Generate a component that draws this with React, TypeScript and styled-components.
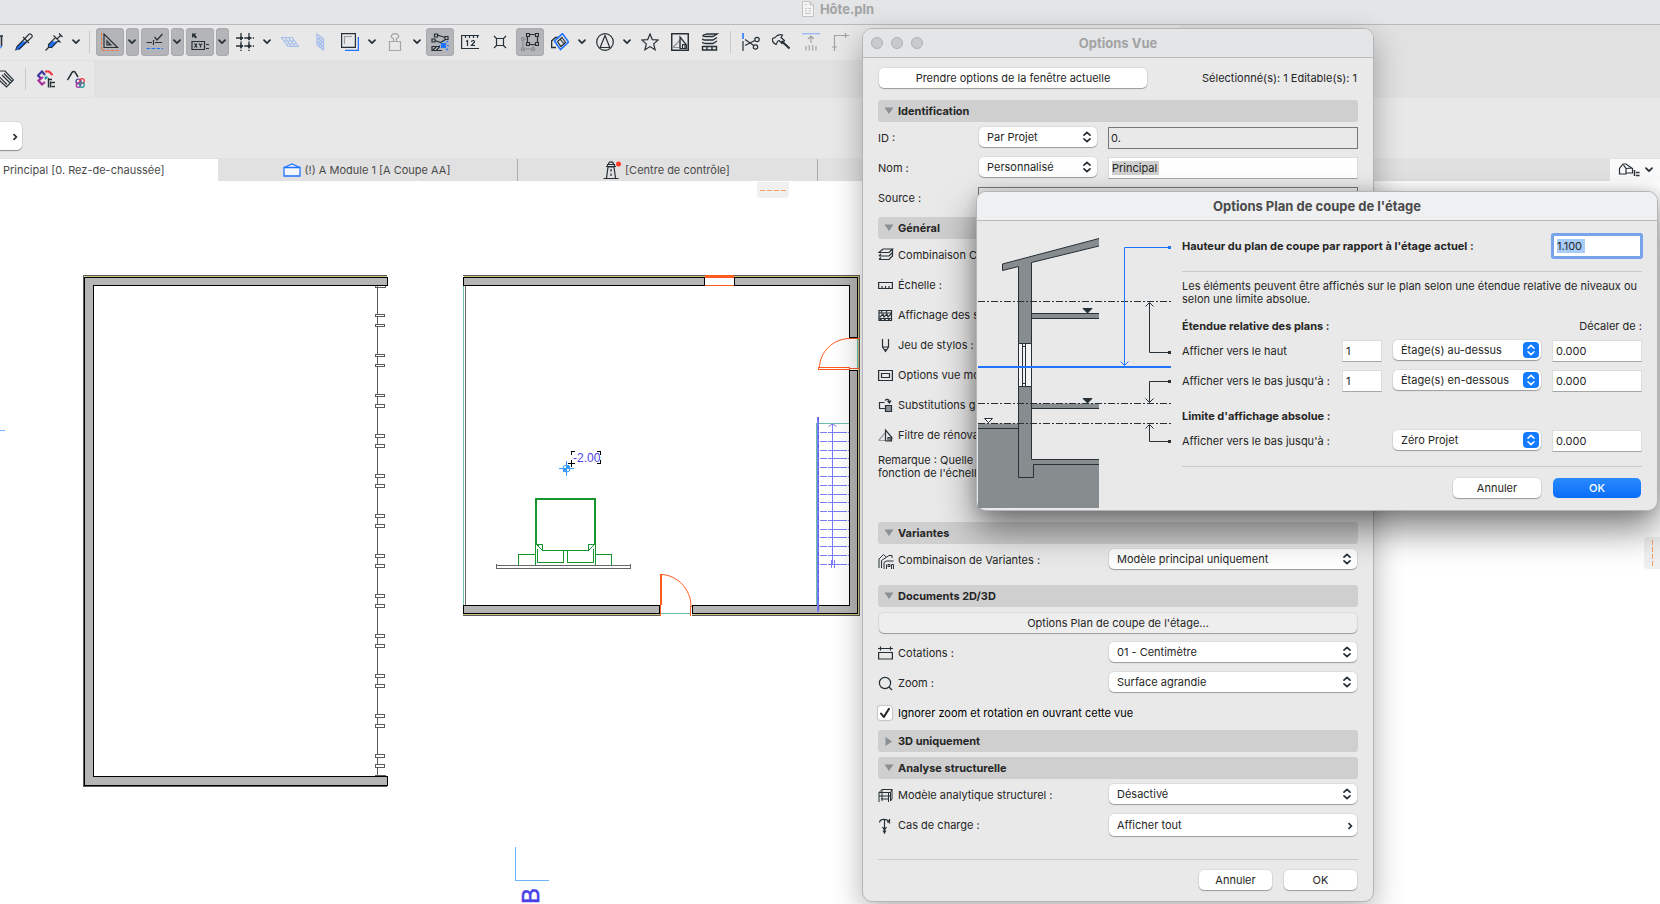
import React from "react";
import styled, { createGlobalStyle, css } from "styled-components";

const INK = "#263036";
const BLUE = "#1f73ff";

const GlobalStyle = createGlobalStyle`
  *, *::before, *::after { box-sizing: border-box; }
  body { margin: 0; background: #fff; }
  body, button, input, select {
    font-family: Inter, "Liberation Sans", sans-serif;
    font-size: 11px;
    line-height: 13px;
    color: #262626;
  }
  svg { display: block; flex: none; }
`;

/* ---------- main window ---------- */

const Desktop = styled.div`
  position: relative;
  display: flex;
  flex-direction: column;
  min-height: 100vh;
  overflow: hidden;
`;

const WindowTitle = styled.header`
  display: flex;
  justify-content: center;
  align-items: center;
  gap: 6px;
  height: 25px;
  padding: 0 0 6px 16px;
  background: #e4e5e6;
  border-bottom: 1px solid #b9babc;
  color: #a2a3a5;
  font-size: 13px;
  font-weight: 700;
  line-height: 18px;
`;

const BarArea = styled.div`
  background: #e1e1e1;
`;

const Toolbar = styled.div`
  display: flex;
  align-items: center;
  gap: 2px;
  width: 71%;
  height: 35px;
  padding-bottom: 1px;
  background: #e8e8e8;
`;

const SmallToolbar = styled(Toolbar)`
  width: max-content;
  height: 36px;
  margin: 1px 0;
  padding: 0 4px 0 0;
`;

const ToolButton = styled.button<{ $on?: boolean; $cut?: number }>`
  display: flex;
  flex: none;
  justify-content: center;
  align-items: center;
  width: 28px;
  height: 28px;
  padding: 0;
  border: 0;
  border-radius: 4px;
  background: ${(p) => (p.$on ? "#b4b5b9" : "transparent")};
  ${(p) => p.$on && css`box-shadow: inset 0 0 0 1px #a9aaae;`}
  ${(p) =>
    p.$cut &&
    css`
      justify-content: flex-end;
      overflow: hidden;
      width: ${p.$cut}px;
      padding-right: 5px;
    `}
`;

const MenuButton = styled(ToolButton)`
  width: 13px;
  padding-right: 1px;
`;

const Separator = styled.span`
  flex: none;
  width: 9px;
  height: 22px;
  background: linear-gradient(#c9c9c9, #c9c9c9) center / 1px 100% no-repeat;
`;

const InfoBar = styled.div`
  display: flex;
  align-items: center;
  height: 60px;
  padding-top: 16px;
  background: #e8e8e8;
`;

const InfoButton = styled.button`
  display: flex;
  align-items: center;
  justify-content: flex-end;
  width: 22px;
  height: 28px;
  padding: 2px 4px 0 0;
  border: 0;
  border-radius: 0 5px 5px 0;
  background: #fff;
  box-shadow: 0 1px 1px rgba(0, 0, 0, 0.35), 0 0 0 1px rgba(0, 0, 0, 0.06);
`;

const TabBar = styled.nav`
  display: flex;
  height: 23px;
  padding-top: 1px;
  background: #e1e1e1;
`;

const Tab = styled.button<{ $active?: boolean }>`
  display: flex;
  flex: none;
  align-items: center;
  justify-content: ${(p) => (p.$active ? "flex-start" : "center")};
  gap: 4px;
  width: ${(p) => (p.$active ? 218 : 300)}px;
  padding: ${(p) => (p.$active ? "0 0 0 3px" : "0 2px 0 0")};
  border: 0;
  border-right: ${(p) => (p.$active ? 0 : "1px solid #ababab")};
  background: ${(p) => (p.$active ? "#fff" : "transparent")};
  color: #4a4a4a;
  white-space: nowrap;
`;

const TabTools = styled.button`
  display: flex;
  align-items: center;
  justify-content: center;
  gap: 5px;
  width: 50px;
  margin-left: auto;
  padding: 0;
  border: 0;
  background: #fafafa;
`;

const Canvas = styled.main`
  position: relative;
  flex: 1;
  background: #fff;
  > svg {
    position: absolute;
    inset: 0;
    width: 100%;
    height: 100%;
  }
`;

const DockHandle = styled.span<{ $side?: boolean }>`
  position: absolute;
  display: flex;
  justify-content: center;
  align-items: center;
  background: #f0f0f0;
  ${(p) =>
    p.$side
      ? css`top: 356px; right: 0; width: 16px; height: 32px; border-radius: 4px 0 0 4px;`
      : css`top: 1px; left: 757px; width: 32px; height: 16px; border-radius: 0 0 4px 4px;`}
  &::after {
    content: "";
    width: ${(p) => (p.$side ? "1px" : "26px")};
    height: ${(p) => (p.$side ? "26px" : "1px")};
    background: repeating-linear-gradient(${(p) => (p.$side ? "180deg" : "90deg")}, #f5a067 0 5px, transparent 5px 7px);
  }
`;

/* ---------- dialogs ---------- */

const Dialog = styled.section<{ $front?: boolean }>`
  position: absolute;
  border: 1px solid #b4b5b6;
  border-radius: 10px;
  background: #e9e9e9;
  ${(p) =>
    p.$front
      ? css`
          top: 191px;
          left: 976px;
          width: 682px;
          box-shadow: 0 18px 36px rgba(0, 0, 0, 0.5), 0 0 14px rgba(0, 0, 0, 0.14);
        `
      : css`
          top: 28px;
          left: 862px;
          width: 512px;
          box-shadow: 0 10px 30px rgba(0, 0, 0, 0.3);
        `}
`;

const DialogTitle = styled.div<{ $front?: boolean }>`
  display: flex;
  align-items: center;
  height: 29px;
  padding: 0 8px;
  border-bottom: 1px solid #b9babc;
  border-radius: 9px 9px 0 0;
  background: ${(p) => (p.$front ? "#eff0f1" : "#e4e5e6")};
  h2 {
    flex: 1;
    margin: 0;
    color: ${(p) => (p.$front ? "#4a4a4a" : "#a2a3a5")};
    font-size: 13px;
    font-weight: 700;
    line-height: 18px;
    text-align: center;
  }
`;

const Lights = styled.div`
  display: flex;
  gap: 8px;
  width: 52px;
`;

const TitleSpacer = styled.span`
  width: 52px;
`;

const Light = styled.button`
  width: 12px;
  height: 12px;
  padding: 0;
  border: 1px solid #b0b1b3;
  border-radius: 50%;
  background: #c8c9cb;
`;

const ViewBody = styled.div`
  display: flex;
  flex-direction: column;
  padding: 5px 15px 11px;
`;

const SectionHead = styled.button<{ $gap: number }>`
  display: flex;
  align-items: center;
  gap: 4px;
  height: 22px;
  margin: ${(p) => p.$gap}px 0 1px;
  padding: 0 6px;
  border: 0;
  border-radius: 3px;
  background: #cfcfcf;
  font-weight: 700;
  text-align: left;
`;

const Row = styled.div`
  display: flex;
  align-items: center;
  height: 30px;
  white-space: nowrap;
`;

const RowLabel = styled.label<{ $narrow?: boolean }>`
  display: flex;
  flex: ${(p) => (p.$narrow ? "0 0 100px" : "1")};
  align-items: center;
  gap: 5px;
`;

const Status = styled.span`
  margin: 0 1px 0 auto;
`;

const raised = css`
  border: 0;
  border-radius: 5px;
  background: #fff;
  box-shadow: 0 1px 1px rgba(0, 0, 0, 0.3), 0 0 0 1px rgba(0, 0, 0, 0.05);
`;

const PushButton = styled.button<{ $width?: string; $tone?: "primary" | "quiet" }>`
  ${raised}
  width: ${(p) => p.$width || "73px"};
  height: 20px;
  margin: 0 1px;
  padding: 0;
  text-align: center;
  ${(p) => p.$tone === "quiet" && css`flex: 1; background: #eeeeee;`}
  ${(p) =>
    p.$tone === "primary" &&
    css`
      background: linear-gradient(#2a8aff, #0a6cf8);
      color: #fff;
      font-weight: 500;
      box-shadow: none;
    `}
`;

const SelectBox = styled.span<{ $width: number }>`
  position: relative;
  flex: none;
  width: ${(p) => p.$width}px;
  height: 20px;
  margin: 0 1px 2px;
  select {
    ${raised}
    appearance: none;
    display: block;
    width: 100%;
    height: 20px;
    padding: 0 24px 0 8px;
  }
  svg {
    position: absolute;
    top: 4px;
    right: 6px;
    pointer-events: none;
  }
`;

const BlueSelectBox = styled(SelectBox)`
  margin: 0 0 2px;
  svg {
    top: 2px;
    right: 2px;
  }
`;

const PopButton = styled.button`
  ${raised}
  display: flex;
  flex: none;
  justify-content: space-between;
  align-items: center;
  width: 248px;
  height: 22px;
  margin: 0 1px;
  padding: 1px 4px 0 8px;
`;

const Field = styled.input<{ $mark?: string; $markWidth?: number; $ring?: boolean; $frame?: boolean }>`
  width: 100%;
  min-width: 0;
  height: 22px;
  padding: 0 3px;
  border: 1px solid #dcdcdc;
  border-bottom-color: #a6a6a6;
  border-radius: 0;
  outline: none;
  background: #fff;
  ${(p) => p.$mark && css`background: linear-gradient(${p.$mark}, ${p.$mark}) 3px 3px / ${p.$markWidth}px 14px no-repeat #fff;`}
  ${(p) => p.$frame && css`padding: 0 2px; border: 1px solid #777; background: transparent;`}
  ${(p) => p.$ring && css`border-color: #76a3ea; border-radius: 1px; box-shadow: 0 0 0 2px #76a3ea;`}
`;

const FieldSlot = styled.span`
  display: flex;
  flex: 1;
  margin-left: 10px;
`;

const SourceSlot = styled(FieldSlot)`
  margin-left: 0;
`;

const Note = styled.p`
  height: 68px;
  margin: 0;
  padding-top: 4px;
`;

const CheckLabel = styled.label`
  display: flex;
  align-items: center;
  gap: 6px;
  color: #000;
`;

const CheckBox = styled.input`
  appearance: none;
  width: 14px;
  height: 14px;
  margin: 0;
  border-radius: 3px;
  box-shadow: 0 0 1px 1px rgba(0, 0, 0, 0.16);
  background: #fff
    url("data:image/svg+xml,%3Csvg xmlns='http://www.w3.org/2000/svg' viewBox='0 0 14 14'%3E%3Cpath d='M3 7.5 5.8 11 11 2.8' fill='none' stroke='%23222' stroke-width='2' stroke-linecap='round' stroke-linejoin='round'/%3E%3C/svg%3E");
`;

const Rule = styled.hr<{ $top: number; $bottom: number }>`
  width: 100%;
  height: 1px;
  margin: ${(p) => p.$top}px 0 ${(p) => p.$bottom}px;
  border: 0;
  background: #cbcbcb;
`;

const Actions = styled.footer`
  display: flex;
  justify-content: flex-end;
  gap: 10px;
`;

const CutBody = styled.div`
  display: flex;
  gap: 11px;
  padding: 0 15px 0 1px;
`;

const CutForm = styled.div`
  flex: 1;
  padding: 10px 0 12px;
  p {
    margin: 0;
  }
`;

const HeightRow = styled(Row)`
  justify-content: space-between;
  padding-right: 1px;
  font-weight: 700;
`;

const HeightField = styled.span`
  width: 88px;
`;

const FormTitle = styled.div`
  display: flex;
  justify-content: space-between;
  align-items: center;
  height: 20px;
  margin-top: 10px;
  h3 {
    margin: 0;
    font-size: 11px;
    font-weight: 700;
  }
`;

const FormRow = styled.div`
  display: grid;
  grid-template-columns: 1fr 40px 148px 90px;
  column-gap: 11px;
  align-items: center;
  height: 30px;
  white-space: nowrap;
`;

/* ---------- icons ---------- */

const Icon = ({ children, w = 18, h = 18 }: { children: React.ReactNode; w?: number; h?: number }) => (
  <svg width={w} height={h} viewBox={`0 0 ${w} ${h}`} fill="none" stroke={INK} strokeWidth="1.2" aria-hidden="true">
    {children}
  </svg>
);

const Chevron = () => (
  <Icon w={8} h={6}>
    <path d="M1 1.2 4 4.2 7 1.2" strokeWidth="1.7" strokeLinecap="round" strokeLinejoin="round" />
  </Icon>
);

const RightChevron = () => (
  <Icon w={6} h={8}>
    <path d="M1.5 1.2 4.4 4 1.5 6.8" strokeWidth="1.7" />
  </Icon>
);

const UpDown = () => (
  <Icon w={8} h={12}>
    <path d="M1 4.2 4 1.4 7 4.2M1 7.8 4 10.6 7 7.8" strokeWidth="1.7" strokeLinecap="round" strokeLinejoin="round" />
  </Icon>
);

const BlueUpDown = () => (
  <Icon w={16} h={16}>
    <rect width="16" height="16" rx="4" fill="#147bff" stroke="none" />
    <path d="M5 6.2 8 3.4 11 6.2M5 9.8 8 12.6 11 9.8" stroke="#fff" strokeWidth="1.5" strokeLinecap="round" strokeLinejoin="round" />
  </Icon>
);

const Triangle = ({ open }: { open: boolean }) => (
  <Icon w={10} h={9}>
    <path d={open ? "M0.5 0.5H9.5L5 7Z" : "M1.5 0V9L8 4.5Z"} fill="#8a8f93" stroke="none" />
  </Icon>
);

const toolIcons: Record<string, React.ReactNode> = {
  edge: (
    <Icon>
      <path d="M13 3V12M16.500 3V13M12 3H18" strokeWidth="1.6" />
      <path d="M13 17 17 13" stroke={BLUE} />
    </Icon>
  ),
  pipette: (
    <Icon>
      <path d="M1.500 16.500 2.500 13.500 7 9H11.500L4.500 16Z" fill={BLUE} stroke={BLUE} />
      <path d="M0.600 17.400 2 13.500 9.500 6M3.500 16.500 12 8.500M8 4 14 10M10 5.500 14 1.200C15.200 0 18.200 2.600 16.800 4.200L12.500 8.200" />
    </Icon>
  ),
  syringe: (
    <Icon>
      <path d="M4 13.500V12L7 9H11.500L6.500 14.500Z" fill={BLUE} stroke={BLUE} />
      <path d="M0.500 17.500 4 14M3.500 14.500V11.500L10.500 4.500 13.500 7.500 6.500 14.500ZM8.500 2.500 15.500 9.500M12 6 16 2M14 0.500 17.500 4" />
    </Icon>
  ),
  square: (
    <Icon>
      <path d="M1 17.500H18M0.500 0V18" stroke="#f0743a" strokeDasharray="3 1.500" />
      <path d="M3 1V14.500H16.500ZM6 8V11.800H9.800Z" />
    </Icon>
  ),
  guide: (
    <Icon>
      <path d="M0.500 9.500H6M7.500 7V12M9 9.500H16M8.500 4 11 7 16.500 1" />
      <path d="M0.500 15.500H17" stroke={BLUE} strokeDasharray="3.500 1.500" />
    </Icon>
  ),
  coords: (
    <Icon>
      <path d="M1 0.500H5.500L4 2 6 4 4.500 5.500 2.500 3.500 1 5Z" fill={INK} stroke="none" />
      <path d="M1 8.500H13.500V16.500H1ZM3.500 10.500 6 14.500M6 10.500 3.500 14.500M8 10.500 9.500 12.500 11 10.500M9.500 12.500V14.500M15 11.500H18M15 15.500H18" />
    </Icon>
  ),
  grid: (
    <Icon>
      <path d="M5 0V18M13 0V18M0 5H18M0 13H18" strokeDasharray="3 1.200" strokeWidth="1.3" />
      <path d="M5 3.300V6.700M3.300 5H6.700M13 3.300V6.700M11.300 5H14.700M5 11.300V14.700M3.300 13H6.700M13 11.300V14.700M11.300 13H14.700" strokeWidth="2" />
    </Icon>
  ),
  plane: (
    <Icon>
      <path d="M0.500 4.500H11L17.500 13.500H7ZM3 8H13M5 11H15.500M4 4.500 10.500 13.500M7.500 4.500 14 13.500" stroke="#a3bdec" />
    </Icon>
  ),
  wallPlane: (
    <Icon>
      <path d="M6 1 12.500 6V17L6 12ZM8.200 2.500V13.500M10.300 4V15.500M6 5 12.500 10M6 8.500 12.500 13.500" stroke="#a3bdec" />
    </Icon>
  ),
  trace: (
    <Icon>
      <path d="M4 17.400H17.400V4" stroke={BLUE} strokeWidth="1.400" />
      <path d="M0.600 0.600H14.400V14.400H0.600Z" />
      <path d="M3.500 11V3.500H11" stroke="#9aa0a4" />
    </Icon>
  ),
  stamp: (
    <Icon>
      <path d="M3.500 8.500H14.500V17.500H3.500ZM7.500 8V5.500C3.500 4 5.500 0.600 9 0.600S14.500 4 10.500 5.500V8" stroke="#a6a6a6" />
    </Icon>
  ),
  gravity: (
    <Icon>
      <path d="M3.500 1H6.500V4H3.500ZM14 3.500H17V6.500H14ZM1 6H4V9H1ZM6.500 2 14 4.500M4 7.500 9.500 9.500 14.500 6.500" />
      <path d="M10.500 10.500H14.500V14.500H10.500ZM12.500 8V9M8 12.500H9M16 12.500H18M15.500 15.500 17 17M15.500 9.500 17 8" fill={BLUE} stroke={BLUE} />
      <path d="M9 13.500H1V17.500H11M2 17 5 14M5.500 17 8.500 14" />
    </Icon>
  ),
  ruler: (
    <Icon>
      <path d="M18 2.500H0.600V15.500H18M4.500 2.500V5M8.500 2.500V5M12.500 2.500V5M16.500 2.500V5M5 8.500 6.500 7.500V13M10.500 9C10.500 7 14 7 13.500 9L10.500 12.500H14" />
    </Icon>
  ),
  node: (
    <Icon>
      <path d="M5.500 5.500H12.500V12.500H5.500ZM3 3 6 6M15 3 12 6M3 15 6 12M15 15 12 12" />
    </Icon>
  ),
  group: (
    <Icon>
      <path d="M2 6V16H12M2 6H7M12 16V11" stroke="#8b8c91" />
      <path d="M0.500 4.500H3V7H0.500ZM0.500 15H3V17.500H0.500ZM11 15H13.500V17.500H11Z" stroke="#8b8c91" fill="#b4b5b9" />
      <path d="M6.500 1.500H16.500V11.500H6.500Z" />
      <path d="M5.500 0.500H8.500V3.500H5.500ZM14.500 0.500H17.500V3.500H14.500ZM5.500 9.500H8.500V12.500H5.500ZM14.500 9.500H17.500V12.500H14.500Z" fill="#b4b5b9" />
    </Icon>
  ),
  rotated: (
    <Icon>
      <path d="M5 14.500H0.600V8L4.500 4.500H8" strokeWidth="1.400" />
      <path d="M11.500 0.600 17.500 9 9.500 16.500 3.500 8Z" stroke={BLUE} strokeWidth="1.600" />
      <path d="M11 4.500 14.500 9.500 10 13.500 6.500 8.500ZM9 6 13 11" />
    </Icon>
  ),
  circle: (
    <Icon>
      <circle cx="9" cy="9" r="8.300" />
      <path d="M9 2.500 13.800 14.500H4.200Z" />
    </Icon>
  ),
  star: (
    <Icon>
      <path d="M9 1 11.300 6.600 17.200 7 12.700 10.900 14.100 16.800 9 13.600 3.900 16.800 5.300 10.900 0.800 7 6.700 6.600Z" />
    </Icon>
  ),
  house: (
    <Icon>
      <path d="M0.700 0.700H17.300V17.300H0.700Z" strokeWidth="1.500" />
      <path d="M2 14.500 9 7V14.500H2Z" stroke="#8f9496" />
      <path d="M9 4 15.500 12V15.500H9ZM11.500 15.500V11.500H14V15.500" />
    </Icon>
  ),
  layers: (
    <Icon>
      <path d="M1.500 13.500H15.500V17H1.500ZM6 13.500V17M11 13.500V17" strokeWidth="1.400" />
      <path d="M2.500 2 6 1H16L12 3.500H5C1.500 3.500 1.500 2.500 2.500 2M1.500 5.500C1.500 7 3 7 5 7H12L16 4.500M1.500 9C1.500 10.500 3 10.500 5 10.500H12L16 8" strokeWidth="1.300" />
    </Icon>
  ),
  scissors: (
    <Icon>
      <path d="M1 0V6" stroke={BLUE} strokeWidth="1.500" />
      <path d="M1 8V18" />
      <circle cx="15" cy="6.500" r="2.200" />
      <circle cx="13.500" cy="14" r="2.200" />
      <path d="M3 6.500 11.800 12.600M3 12.500 12.800 7.500" />
    </Icon>
  ),
  axe: (
    <Icon>
      <path d="M9.500 8 17.500 15.500" strokeWidth="2" />
      <path d="M3 4.500C5 2 8 1 10.500 2L9 4.500 12.500 7.500 10 10.500 7 7.500C4.500 8 5.500 10 4 11.500 1 10 0 7.500 0.600 5.500Z" />
    </Icon>
  ),
  offset: (
    <Icon>
      <path d="M0 0.700H18" stroke="#8fb3f7" />
      <path d="M9 3V10M6 6 9 3 12 6M4 13V17.500M7.300 12V17.500M10.700 12V17.500M14 13V17.500" stroke="#a3a3a3" />
    </Icon>
  ),
  corner: (
    <Icon>
      <path d="M2.500 18V2.500H17M0 14H5M13.500 0V5" stroke="#a3a3a3" />
    </Icon>
  ),
  tag: (
    <Icon>
      <path d="M1 1H9L17.500 10 10.500 17 1 8ZM6 5 14 13M3.500 7 11 14.500M8 3.500 15.500 11" />
    </Icon>
  ),
  schedule: (
    <Icon>
      <path d="M8 5 5 1.500 1 5.500 4.500 9" stroke="#3b3a9c" strokeWidth="2.200" />
      <path d="M8 1.500H12L15.500 5" stroke="#ef3340" strokeWidth="2.200" />
      <path d="M6 7 1.500 10.500 5 14.500 8 12" stroke="#a8329b" strokeWidth="2.200" />
      <path d="M8 9 10 6.500" stroke="#1d9aa0" strokeWidth="2.200" />
      <path d="M11.500 8V17.500M12 9.500H15M13.500 11.500V17.500M14 12.500H18M14.500 16.500H18" strokeWidth="1.400" />
    </Icon>
  ),
  change: (
    <Icon>
      <path d="M0.500 10 5 2.500C6 1 8 1 8.500 3L11 7" strokeWidth="1.500" />
      <circle cx="11.500" cy="11.500" r="2.500" stroke="#3b3a9c" />
      <circle cx="15" cy="11" r="2.300" stroke="#ef3340" />
      <circle cx="11.500" cy="15" r="2.300" stroke="#a8329b" />
      <circle cx="15" cy="15" r="2.300" stroke="#1d9aa0" />
    </Icon>
  ),
};

const rowIcons: Record<string, React.ReactNode> = {
  layers: <path d="M1 4.500 5 1H14.500L11 4.500ZM1 8 3 6M1 8H11L14.500 4.500M1 11.500 3 9.500M1 11.500H11L14.500 8V1" />,
  scale: <path d="M0.600 4.500H14.400V10.500H0.600ZM4 10V8M7.500 10V8M11 10V8" />,
  structure: <path d="M1 2.500H13.500V12.500H1ZM1 5H13.500M1 10.500H13.500M2 9 5 6 6 9 9 6 10 9 13 6M2 12 4 10.500M6 12 8 10.500M10 12 12 10.500M3 4.500 4 3M8 4.500 9 3" />,
  pen: <path d="M4.500 1V9L7.500 13.500 10.500 9V1M4.500 9H10.500M6.500 11.500H8.500" />,
  model: <path d="M0.600 2.500H14.400V12.500H0.600ZM3.500 5.500H11.500V9.500H3.500Z" />,
  override: (
    <>
      <path d="M7 10.500H1.500V4.500H6.500M7 2.500C9 0.500 11 1 11.500 4M9.500 3 11.500 5 13 2.500" />
      <path d="M7.500 7.500H13.500V13.500H7.500Z" fill="#8a8f93" />
    </>
  ),
  renovation: (
    <>
      <path d="M0.600 12.500 7 5M0.600 12.500H7" stroke="#9b9fa2" />
      <path d="M7.500 13V2L13.500 9V13H7.500M10 13V9.500H12V13M13 8.500 14.500 10.500" />
    </>
  ),
  variant: <path d="M1 15V6L5.500 1.500 8 4M3.500 15V7.500L11 2.500H14V5M6 16V9.500L8.500 8H15.500M8.500 16V11.500M10 11.500H12V13.500H10ZM13.500 16V11.500H15.500V16" strokeWidth="1" />,
  dimension: <path d="M0 2.500H15M2.500 0.500V4.500M12.500 0.500V4.500M0.600 6.500H14.400V13H0.600Z" />,
  zoom: (
    <>
      <circle cx="7" cy="7" r="5.600" />
      <path d="M11 11 14 14" />
    </>
  ),
  analytic: <path d="M1 14V4.500L4 1.500H14V11L12.500 13V4.500H1M4 13V1.500M1 8H12.500M10.500 14V5M3 11H10.500M12.500 4.500 14 1.500" strokeWidth="1" />,
  load: <path d="M6.500 2V11M1.500 4.500C2 0.500 9 0.500 11 4M11.500 1V5.500M9 4H12M4.500 9 6.500 12 8.500 9M5.500 13H7.500L6.500 15Z" />,
};

const RowIcon = ({ name }: { name: string }) => (
  <svg width="15" height="15" viewBox="0 0 15 15" fill="none" stroke={INK} strokeWidth="1.200" overflow="visible" aria-hidden="true">
    {rowIcons[name]}
  </svg>
);

/* ---------- drawings ---------- */

const louvres = Array.from({ length: 12 }, (_, i) => [315 + i * 40, 325 + i * 40]).flat();
const treads = [432, 441, 450, 458, 467, 476, 485, 494, 502, 511, 520, 529, 537, 546, 555, 564];

const FloorPlan = () => (
  <svg role="img" aria-label="Plan du rez-de-chaussée">
    <g transform="translate(0 -181)" fill="none" stroke="#000" shapeRendering="crispEdges">
      {/* left hall */}
      <path d="M387 275.500H83.500V786.500H387" stroke="#5c5c5c" />
      <path d="M85 276.500H387" stroke="#cdc27a" />
      <path d="M387.500 277.500H84.500V785.500H387.500V776H93.500V285.500H387.500Z" fill="#b5b5b5" />
      <g stroke="#5a5a5a" fill="#fff">
        <path d="M377.500 286V776M375.500 286V287.500H385.500V286M375 775.500H386" />
        {louvres.map((y, i) => (
          <rect key={y} x="375.500" y={y - 0.5} width="9" height={i < 5 ? 2 : 3} />
        ))}
      </g>
      {/* right room */}
      <path d="M463 275.500H705M734 275.500H859.500V615.500H692M660 615.500H463" stroke="#5c5c5c" />
      <path d="M464 276.500H705M734 276.500H858.500V614.500H692M660 614.500H463" stroke="#cdc27a" />
      <path d="M463.500 277.500H704.500V285.500H463.500ZM734.500 277.500H857.500V337.500H849.500V285.500H734.500ZM849.500 370.500H857.500V613.500H692.500V605.500H849.500ZM463.500 605.500H659.500V613.500H463.500Z" fill="#b5b5b5" />
      <path d="M463.500 286V605M857.500 338V368M661 613.500H691" stroke="#6cc0ae" />
      <path d="M465.500 286V605" stroke="#666" />
      <g stroke="#ff5a1f">
        <path d="M705 276.500H734" strokeWidth="3" />
        <path d="M705 285.500H734M849 338.500H860M818.500 367.500H849.500V369.500H818.500ZM849.500 368.500H860M660.500 605V615.500M690.500 615.500V606H692" />
        <path d="M661 574V605" strokeWidth="2" />
        <path d="M819.500 367C820 352 833 338.500 850 338.500M661 574.500C678 575 691 590 691 606" shapeRendering="auto" />
      </g>
      {/* stairs */}
      <path d="M816.500 605V423.500H849" stroke="#6cc0ae" />
      <g stroke="#7c7cf6">
        <path d="M818 417V612" strokeWidth="2" />
        <path d="M818.500 417V612" stroke="#5c5cd8" strokeDasharray="4 2 1 2" />
        {treads.map((y) => (
          <path key={y} d={`M820 ${y + 0.5}H827M828 ${y + 0.5}H847M848 ${y + 0.5}H849`} />
        ))}
        <path d="M832.500 424V564M831.500 560V568M834.500 560V568" />
        <path d="M828.500 426.500 832.500 424 836.500 426.500" shapeRendering="auto" />
      </g>
      {/* bed */}
      <g stroke="#14962d">
        <path d="M536 545V499H595V545" strokeWidth="2" />
        <path d="M535.500 545V565.500M595.500 545V565.500M536 544.500H542.500V550.500H588.500V544.500H595M537.500 548.500V562.500H563.500V550.500M567.500 550.500V562.500H593.500V548.500M537 544.500 542 550M594.500 544.500 589 550M535.500 554.500H518.500V565.500H611.500V554.500H595.500" />
      </g>
      <path d="M496.500 564V568.500H630.500V564M497 565.500H630" stroke="#666" />
      {/* level marker */}
      <g stroke="#3a9bff">
        <path d="M559 468.500H574M566.500 461V476" />
        <circle cx="566.500" cy="468.500" r="3.500" shapeRendering="auto" />
        <path d="M566.500 468.500V465A3.500 3.500 0 0 1 570 468.500ZM566.500 468.500V472A3.500 3.500 0 0 1 563 468.500Z" fill="#3a9bff" />
      </g>
      <path d="M571.500 455V451.500H575M597 451.500H600.500V455M600.500 460V463.500H597M568 463.500H575M571.500 460V467" />
      <path d="M515.500 847V880.500H549M0 430.500H5" stroke="#6cb4ff" />
    </g>
    <g transform="translate(0 -181)" fill="#4a42e8" fontFamily="Liberation Sans, sans-serif">
      <text x="573" y="462" fontSize="12">-2.00</text>
      <text transform="translate(539 904) rotate(-90)" fontSize="24" stroke="#4a42e8" strokeWidth="0.600">B</text>
    </g>
  </svg>
);

const SectionDrawing = () => (
  <svg width="193" height="288" role="img" aria-label="Coupe de l'étage">
    <g transform="translate(-978 -221)" fill="none" stroke={INK}>
      <g fill="#878c8f" stroke="none">
        <path d="M1002.500 264 1099 238.500V246L1031.500 262.500V343.500H1018.500V266.500L1002.500 270.500Z" />
        <path d="M1031 313.500H1099V318.500H1031ZM1018.500 386.500H1031.500V403.500H1099V408.500H1031.500V459.500H1099V508H978V423.500H1018.500Z" />
      </g>
      <path d="M1099 238.500 1002.500 264V270.500L1018.500 266.500V343.500H1031.500V262.500L1099 246" />
      <path d="M1099 313.500H1031.500V318.500H1099M1099 408.500H1031.500V386.500H1018.500V477.500H1033.500V464.500H1099M1031.500 408V459.500H1099M978 428.500H1018.500" />
      <path d="M1018.500 343.500V386.500H1031.500V343.500ZM1022.500 343.500V386.500M1025.500 343.500V386.500M1022.500 346.500H1025.500M1022.500 383.500H1025.500" fill="#f4f4f4" />
      <path d="M978 301.500H1171M978 403.500H1171M978 423.500H1171" strokeDasharray="7 2 2 2" />
      <path d="M1083 308.500H1092L1087.500 313ZM1083 398.500H1092L1087.500 403Z" fill={INK} />
      <path d="M984.500 418.500H992.500L988.500 422.500Z" fill="#fff" />
      <path d="M1170 352.500H1149.500V303M1145.500 306.500 1149.500 302.500 1153.500 306.500M1170 381.500H1149.500V402M1145.500 398.500 1149.500 402.500 1153.500 398.500M1170 441.500H1149.500V425M1145.500 428.500 1149.500 424.500 1153.500 428.500" />
      <path d="M1168 351H1171V354H1168ZM1168 380H1171V383H1168ZM1168 440H1171V443H1168Z" fill={INK} stroke="none" />
      <path d="M978 367H1171" stroke={BLUE} strokeWidth="2" />
      <path d="M1170 247.500H1124.500V365M1120.500 361.500 1124.500 365.500 1128.500 361.500" stroke={BLUE} />
      <path d="M1168 246H1171V249H1168Z" fill={BLUE} stroke="none" />
    </g>
  </svg>
);

/* ---------- parts ---------- */

const Tool = ({ icon, label, on, menu, cut }: { icon: string; label: string; on?: boolean; menu?: boolean; cut?: number }) => (
  <>
    <ToolButton $on={on} $cut={cut} aria-label={label} aria-pressed={on}>
      {toolIcons[icon]}
    </ToolButton>
    {menu && (
      <MenuButton $on={on} aria-label={`${label} : menu`}>
        <Chevron />
      </MenuButton>
    )}
  </>
);

const Choice = ({ id, label, value, width }: { id?: string; label?: string; value: string; width: number }) => (
  <SelectBox $width={width}>
    <select id={id} aria-label={label} defaultValue={value}>
      <option>{value}</option>
    </select>
    <UpDown />
  </SelectBox>
);

const BlueChoice = ({ label, value }: { label: string; value: string }) => (
  <BlueSelectBox $width={148}>
    <select aria-label={label} defaultValue={value}>
      <option>{value}</option>
    </select>
    <BlueUpDown />
  </BlueSelectBox>
);

const Head = ({ children, gap, open = true }: { children: string; gap: number; open?: boolean }) => (
  <SectionHead $gap={gap} aria-expanded={open}>
    <Triangle open={open} />
    {children}
  </SectionHead>
);

const generalRows = [
  ["layers", "Combinaison Calques :"],
  ["scale", "Échelle :"],
  ["structure", "Affichage des structures :"],
  ["pen", "Jeu de stylos :"],
  ["model", "Options vue modèle :"],
  ["override", "Substitutions graphiques :"],
  ["renovation", "Filtre de rénovation :"],
];

const ChoiceRow = ({ id, icon, label, value }: { id: string; icon: string; label: string; value: string }) => (
  <Row>
    <RowLabel htmlFor={id}>
      <RowIcon name={icon} />
      {label}
    </RowLabel>
    <Choice id={id} value={value} width={248} />
  </Row>
);

const ViewOptions = () => (
  <Dialog role="dialog" aria-label="Options Vue">
    <DialogTitle>
      <Lights>
        <Light aria-label="Fermer" />
        <Light aria-label="Réduire" />
        <Light aria-label="Agrandir" />
      </Lights>
      <h2>Options Vue</h2>
      <TitleSpacer />
    </DialogTitle>
    <ViewBody>
      <Row>
        <PushButton $width="268px">Prendre options de la fenêtre actuelle</PushButton>
        <Status>Sélectionné(s): 1 Editable(s): 1</Status>
      </Row>
      <Head gap={7}>Identification</Head>
      <Row>
        <RowLabel $narrow htmlFor="view-id">ID :</RowLabel>
        <Choice label="Type d'ID" value="Par Projet" width={118} />
        <FieldSlot>
          <Field id="view-id" $frame defaultValue="0." readOnly />
        </FieldSlot>
      </Row>
      <Row>
        <RowLabel $narrow htmlFor="view-name">Nom :</RowLabel>
        <Choice label="Type de nom" value="Personnalisé" width={118} />
        <FieldSlot>
          <Field id="view-name" $mark="#d0d0d0" $markWidth={47} defaultValue="Principal" />
        </FieldSlot>
      </Row>
      <Row>
        <RowLabel $narrow htmlFor="view-source">Source :</RowLabel>
        <SourceSlot>
          <Field id="view-source" $frame readOnly />
        </SourceSlot>
      </Row>
      <Head gap={4}>Général</Head>
      {generalRows.map(([icon, label]) => (
        <Row key={icon}>
          <RowLabel as="span">
            <RowIcon name={icon} />
            {label}
          </RowLabel>
        </Row>
      ))}
      <Note>
        Remarque : Quelle que soit la vue, l'affichage varie en
        <br />
        fonction de l'échelle.
      </Note>
      <Head gap={4}>Variantes</Head>
      <ChoiceRow id="variant" icon="variant" label="Combinaison de Variantes :" value="Modèle principal uniquement" />
      <Head gap={10}>Documents 2D/3D</Head>
      <Row>
        <PushButton $tone="quiet">Options Plan de coupe de l'étage...</PushButton>
      </Row>
      <ChoiceRow id="dims" icon="dimension" label="Cotations :" value="01 - Centimètre" />
      <ChoiceRow id="zoom" icon="zoom" label="Zoom :" value="Surface agrandie" />
      <Row>
        <CheckLabel>
          <CheckBox type="checkbox" defaultChecked />
          Ignorer zoom et rotation en ouvrant cette vue
        </CheckLabel>
      </Row>
      <Head gap={2} open={false}>3D uniquement</Head>
      <Head gap={4}>Analyse structurelle</Head>
      <ChoiceRow id="model" icon="analytic" label="Modèle analytique structurel :" value="Désactivé" />
      <Row>
        <RowLabel htmlFor="load">
          <RowIcon name="load" />
          Cas de charge :
        </RowLabel>
        <PopButton id="load">
          Afficher tout
          <RightChevron />
        </PopButton>
      </Row>
      <Rule $top={19} $bottom={10} />
      <Actions>
        <PushButton>Annuler</PushButton>
        <PushButton>OK</PushButton>
      </Actions>
    </ViewBody>
  </Dialog>
);

const CutPlaneOptions = () => (
  <Dialog $front role="dialog" aria-label="Options Plan de coupe de l'étage">
    <DialogTitle $front>
      <h2>Options Plan de coupe de l'étage</h2>
    </DialogTitle>
    <CutBody>
      <SectionDrawing />
      <CutForm>
        <HeightRow>
          <label htmlFor="cut-height">Hauteur du plan de coupe par rapport à l'étage actuel :</label>
          <HeightField>
            <Field id="cut-height" $ring $mark="#a9cdfa" $markWidth={28} defaultValue="1.100" />
          </HeightField>
        </HeightRow>
        <Rule $top={10} $bottom={8} />
        <p>Les éléments peuvent être affichés sur le plan selon une étendue relative de niveaux ou selon une limite absolue.</p>
        <FormTitle>
          <h3>Étendue relative des plans :</h3>
          <span>Décaler de :</span>
        </FormTitle>
        <FormRow>
          <label htmlFor="up">Afficher vers le haut</label>
          <Field id="up" defaultValue="1" />
          <BlueChoice label="Étages vers le haut" value="Étage(s) au-dessus" />
          <Field aria-label="Décalage vers le haut" defaultValue="0.000" />
        </FormRow>
        <FormRow>
          <label htmlFor="down">Afficher vers le bas jusqu'à :</label>
          <Field id="down" defaultValue="1" />
          <BlueChoice label="Étages vers le bas" value="Étage(s) en-dessous" />
          <Field aria-label="Décalage vers le bas" defaultValue="0.000" />
        </FormRow>
        <FormTitle>
          <h3>Limite d'affichage absolue :</h3>
        </FormTitle>
        <FormRow>
          <label htmlFor="limit">Afficher vers le bas jusqu'à :</label>
          <span />
          <BlueChoice label="Référence" value="Zéro Projet" />
          <Field id="limit" defaultValue="0.000" />
        </FormRow>
        <Rule $top={10} $bottom={11} />
        <Actions>
          <PushButton $width="88px">Annuler</PushButton>
          <PushButton $width="88px" $tone="primary">OK</PushButton>
        </Actions>
      </CutForm>
    </CutBody>
  </Dialog>
);

export default function App() {
  return (
    <Desktop>
      <GlobalStyle />
      <WindowTitle>
        <svg width="12" height="16" viewBox="0 0 12 16" fill="#f4f4f4" stroke="#c2c3c5" aria-hidden="true">
          <path d="M0.500 0.500H8L11.500 4V15.500H0.500ZM8 0.500V4H11.500M3 4 5 3M3 7.500H5M6.500 7.500H9M3 10H5M6.500 10H9M3 12.500H9" />
        </svg>
        Hôte.pln
      </WindowTitle>
      <BarArea>
        <Toolbar>
          <Tool icon="edge" label="Sélection" cut={8} />
          <Tool icon="pipette" label="Pipette" />
          <Tool icon="syringe" label="Seringue" menu />
          <Separator />
          <Tool icon="square" label="Lignes guides" on menu />
          <Tool icon="guide" label="Points d'accrochage" on menu />
          <Tool icon="coords" label="Coordonnées" on menu />
          <Tool icon="grid" label="Grille" menu />
          <Tool icon="plane" label="Plan d'édition" />
          <Tool icon="wallPlane" label="Plan vertical" />
          <Tool icon="trace" label="Trace" menu />
          <Tool icon="stamp" label="Verrou" menu />
          <Tool icon="gravity" label="Gravité" on />
          <Tool icon="ruler" label="Mesure" />
          <Tool icon="node" label="Nœud" />
          <Tool icon="group" label="Suspendre groupes" on />
          <Tool icon="rotated" label="Orientation" menu />
          <Tool icon="circle" label="Solide" menu />
          <Tool icon="star" label="Favoris" />
          <Tool icon="house" label="Rénovation" />
          <Tool icon="layers" label="Calques" />
          <Separator />
          <Tool icon="scissors" label="Couper" />
          <Tool icon="axe" label="Scinder" />
          <Tool icon="offset" label="Ajuster" />
          <Tool icon="corner" label="Intersection" />
        </Toolbar>
        <SmallToolbar>
          <Tool icon="tag" label="Étiquette" cut={19} />
          <Separator />
          <Tool icon="schedule" label="Propriétés" />
          <Tool icon="change" label="Modification" />
        </SmallToolbar>
      </BarArea>
      <InfoBar>
        <InfoButton aria-label="Suite">
          <RightChevron />
        </InfoButton>
      </InfoBar>
      <TabBar>
        <Tab $active>Principal [0. Rez-de-chaussée]</Tab>
        <Tab>
          <Icon w={18} h={14}>
            <path d="M1 4.500H17V13H1ZM1 4.500 9 1 17 4.500" stroke={BLUE} strokeWidth="1.300" fill="#f3f6fc" />
          </Icon>
          (!) A Module 1 [A Coupe AA]
        </Tab>
        <Tab>
          <Icon w={18} h={18}>
            <path d="M0.500 17.500H15.500M3.500 17 5 6H11L12.500 17M3 5.500H13M4.500 5.500V3.500H11.500V5.500M5.500 3.500C5.500 0 10.500 0 10.500 3.500M8 8V10.500M8 12.500V15" />
            <circle cx="15.500" cy="3" r="2.500" fill="#ff3b28" stroke="none" />
          </Icon>
          [Centre de contrôle]
        </Tab>
        <TabTools aria-label="Options de vue rapides">
          <Icon w={22} h={14}>
            <path d="M1.500 11V5.500L5 1H8L14.500 5.500V10H8V11ZM8 10V5.500L5.500 2M8 5.500 14 5" />
            <path d="M16.500 7V13M18 9.500H21.500M18 12.500H21.500" strokeWidth="1.500" />
          </Icon>
          <Chevron />
        </TabTools>
      </TabBar>
      <Canvas>
        <FloorPlan />
        <DockHandle />
        <DockHandle $side />
      </Canvas>
      <ViewOptions />
      <CutPlaneOptions />
    </Desktop>
  );
}
